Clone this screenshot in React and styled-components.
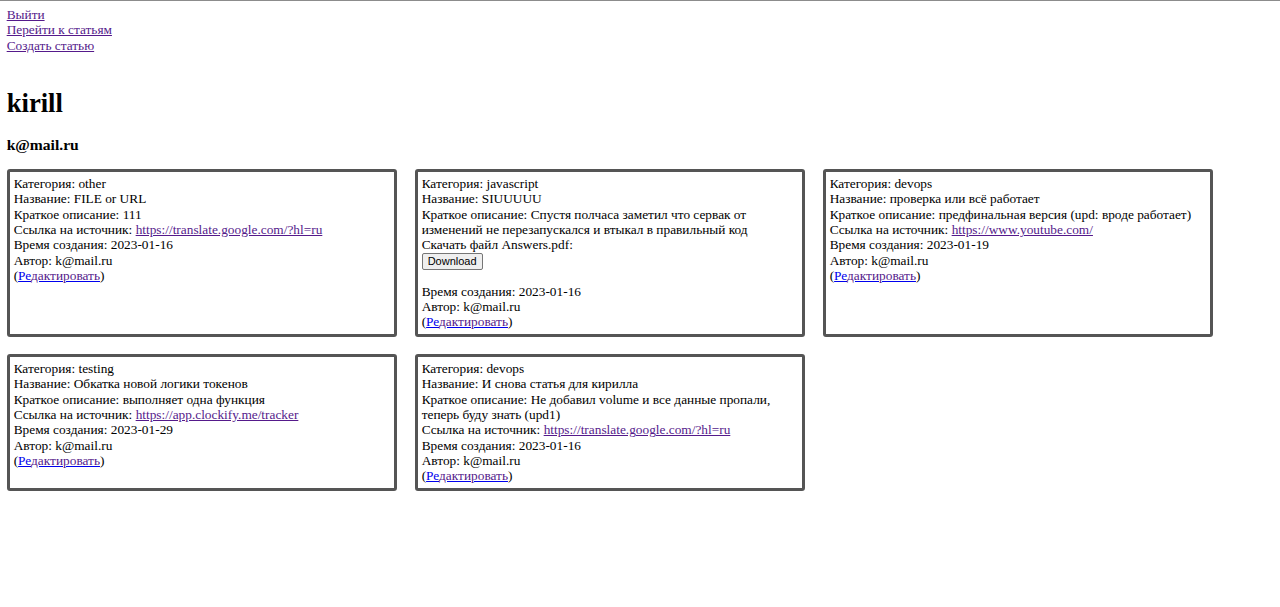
import React from "react";
import styled, { createGlobalStyle } from "styled-components";

const Global = createGlobalStyle`
  html, body { margin: 0; padding: 0; background: #fff; }
  body { font-family: "Liberation Serif", "Times New Roman", serif; font-size: 13.33px; color: #000; }
`;

const Page = styled.div`
  border-top: 1px solid #8c8c8c;
  padding: 5.67px 6.67px 20px;
`;

const Nav = styled.nav`
  display: flex;
  flex-direction: column;
  align-items: flex-start;
`;

const NavLink = styled.a`
  display: block;
  height: 15.5px;
  line-height: 15.5px;
  color: #551a8b;
  text-decoration: underline;
`;

const Title = styled.h1`
  font-family: "Liberation Serif", serif;
  font-size: 26.67px;
  line-height: 30.7px;
  font-weight: bold;
  margin: 34.5px 0 0;
`;

const Email = styled.h3`
  font-family: "Liberation Serif", serif;
  font-size: 15.6px;
  line-height: 17.9px;
  font-weight: bold;
  margin: 17.6px 0 0;
`;

const Grid = styled.div`
  display: grid;
  grid-template-columns: repeat(3, 390px);
  column-gap: 18px;
  row-gap: 17px;
  margin-top: 15px;
`;

const Card = styled.div`
  box-sizing: border-box;
  border: 3px solid #555;
  border-radius: 3px;
  padding: 4.2px 4px;
  line-height: 15.33px;
`;

const Line = styled.div``;

const Link = styled.a`
  color: ${(p) => (p.$visited ? "#551a8b" : "#0000ee")};
  text-decoration: underline;
`;

const Visited = styled.span`
  color: #551a8b;
`;

const DownloadButton = styled.button`
  display: block;
  box-sizing: border-box;
  height: 17px;
  padding: 0 5px;
  font-family: "Liberation Sans", Arial, sans-serif;
  font-size: 11px;
  line-height: 15px;
  color: #000;
  background: #efefef;
  border: 1px solid #767676;
  border-radius: 2px;
`;

const Spacer = styled.div`
  height: 14px;
`;

const articles = [
  {
    category: "other",
    name: "FILE or URL",
    desc: "111",
    url: "https://translate.google.com/?hl=ru",
    date: "2023-01-16",
  },
  {
    category: "javascript",
    name: "SIUUUUU",
    desc: "Спустя полчаса заметил что сервак от изменений не перезапускался и втыкал в правильный код",
    file: "Answers.pdf",
    date: "2023-01-16",
  },
  {
    category: "devops",
    name: "проверка или всё работает",
    desc: "предфинальная версия (upd: вроде работает)",
    url: "https://www.youtube.com/",
    date: "2023-01-19",
  },
  {
    category: "testing",
    name: "Обкатка новой логики токенов",
    desc: "выполняет одна функция",
    url: "https://app.clockify.me/tracker",
    date: "2023-01-29",
  },
  {
    category: "devops",
    name: "И снова статья для кирилла",
    desc: "Не добавил volume и все данные пропали, теперь буду знать (upd1)",
    url: "https://translate.google.com/?hl=ru",
    date: "2023-01-16",
  },
];

function ArticleCard({ a }) {
  return (
    <Card>
      <Line>Категория: {a.category}</Line>
      <Line>Название: {a.name}</Line>
      <Line>Краткое описание: {a.desc}</Line>
      {a.url && (
        <Line>
          Ссылка на источник: <Link $visited href="#">{a.url}</Link>
        </Line>
      )}
      {a.file && (
        <>
          <Line>Скачать файл {a.file}:</Line>
          <DownloadButton type="button">Download</DownloadButton>
          <Spacer />
        </>
      )}
      <Line>Время создания: {a.date}</Line>
      <Line>Автор: k@mail.ru</Line>
      <Line>
        (<Link href="#">Ре<Visited>дактировать</Visited></Link>)
      </Line>
    </Card>
  );
}

export default function App() {
  return (
    <Page>
      <Global />
      <Nav>
        <NavLink href="#">Выйти</NavLink>
        <NavLink href="#">Перейти к статьям</NavLink>
        <NavLink href="#">Создать статью</NavLink>
      </Nav>
      <Title>kirill</Title>
      <Email>k@mail.ru</Email>
      <Grid>
        {articles.map((a, i) => (
          <ArticleCard key={i} a={a} />
        ))}
      </Grid>
    </Page>
  );
}
